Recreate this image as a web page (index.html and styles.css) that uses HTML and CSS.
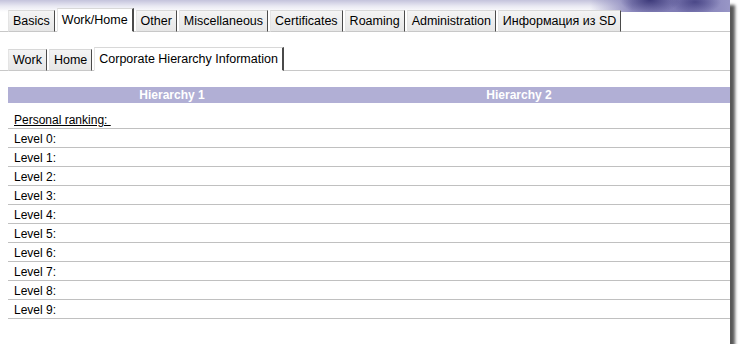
FILE: index.html
```html
<!DOCTYPE html>
<html lang="en">
<head>
  <meta charset="UTF-8">
  <title>Corporate Hierarchy Information</title>
  <link rel="stylesheet" href="styles.css">
</head>
<body>

  <div class="panel">
    <!-- decorative banner picture, top right -->
    <div class="banner-art"></div>

    <!-- Main tabs -->
    <ul class="tabs">
      <li class="tab">Basics</li>
      <li class="tab active">Work/Home</li>
      <li class="tab">Other</li>
      <li class="tab">Miscellaneous</li>
      <li class="tab">Certificates</li>
      <li class="tab">Roaming</li>
      <li class="tab">Administration</li>
      <li class="tab">Информация из SD</li>
    </ul>

    <!-- Sub tabs -->
    <ul class="tabs subtabs">
      <li class="tab">Work</li>
      <li class="tab">Home</li>
      <li class="tab active">Corporate Hierarchy Information</li>
    </ul>

    <!-- Hierarchy table -->
    <div class="hierarchy">
      <div class="head">
        <span>Hierarchy 1</span>
        <span>Hierarchy 2</span>
        <span></span>
      </div>
      <div class="row first"><u>Personal ranking:&nbsp;</u></div>
      <div class="row">Level 0:</div>
      <div class="row">Level 1:</div>
      <div class="row">Level 2:</div>
      <div class="row">Level 3:</div>
      <div class="row">Level 4:</div>
      <div class="row">Level 5:</div>
      <div class="row">Level 6:</div>
      <div class="row">Level 7:</div>
      <div class="row">Level 8:</div>
      <div class="row">Level 9:</div>
    </div>
  </div>

</body>
</html>
```

FILE: styles.css
```css
body {
  margin: 0;
  background-color: #fff;
  font-family: "Liberation Sans", Arial, sans-serif;
  font-size: 12px;
  color: #000;
}

.panel {
  position: relative;
  width: 730px;
  height: 344px;
  background: linear-gradient(#c4c3dc 0, #e8e8f2 6px, #fff 12px);
  box-shadow: 5px 5px 3px rgba(0, 0, 0, 0.65);
  overflow: hidden;
}

.banner-art {
  position: absolute;
  top: 0;
  right: 0;
  width: 140px;
  height: 12px;
  background:
    radial-gradient(ellipse 30px 14px at 60px 0, #3d3a7a 0, rgba(61,58,122,0) 100%),
    radial-gradient(ellipse 26px 12px at 105px 2px, #4b4888 0, rgba(75,72,136,0) 100%),
    linear-gradient(90deg, rgba(170,168,210,0) 0, #8c89bd 30%, #7b78b2 70%, #9896c6 100%);
}

.tabs {
  list-style: none;
  margin: 0;
  padding: 8px 0 0 8px;
  display: flex;
  align-items: flex-end;
  border-bottom: 1px solid #c8c8c8;
  position: relative;
}

.tab {
  height: 20px;
  line-height: 20px;
  padding: 0 4px;
  margin-right: 2px;
  margin-bottom: -1px;
  font-size: 12.5px;
  background: linear-gradient(#f4f4f4, #e6e6e6);
  border-top: 1px solid #d8d8d8;
  border-left: 1px solid #e4e4e4;
  border-right: 1px solid #4a4a4a;
  border-bottom: 1px solid #c8c8c8;
  white-space: nowrap;
}

.tab.active {
  height: 22px;
  line-height: 22px;
  background: #fff;
  border-bottom-color: #fff;
  border-right: 2px solid #4a4a4a;
}

.subtabs {
  margin-top: 15px;
  padding-top: 0;
}

.hierarchy {
  margin: 16px 0 0 8px;
}

.head {
  display: grid;
  grid-template-columns: 328px 366px 1fr;
  height: 16px;
  line-height: 16px;
  background-color: #b1afd5;
  color: #fff;
  font-weight: bold;
  text-align: center;
}

.row {
  height: 18px;
  line-height: 20px;
  padding-left: 6px;
  border-bottom: 1px solid #c0c0c0;
}

.row.first {
  height: 19px;
  margin-top: 6px;
  line-height: 22px;
}
```
